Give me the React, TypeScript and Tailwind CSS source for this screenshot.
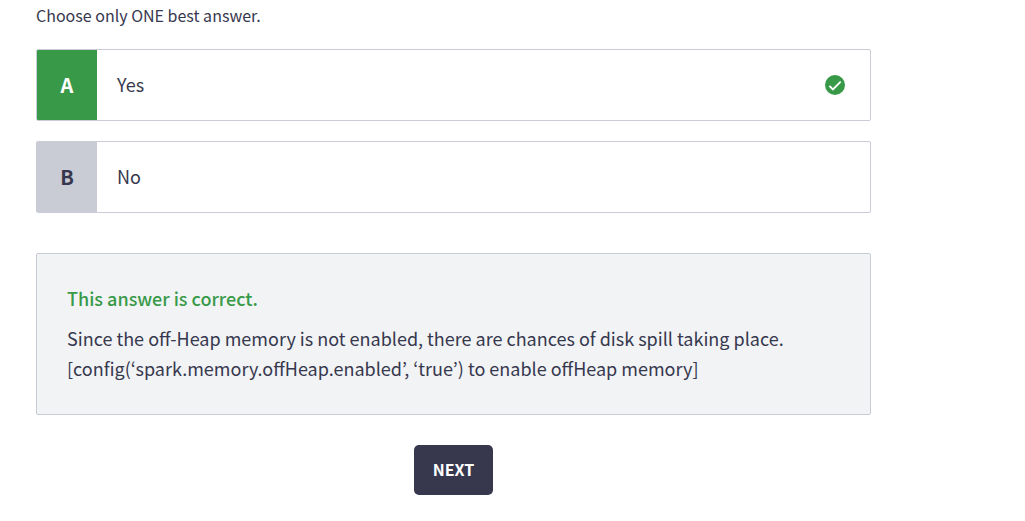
import { useState } from "react";

const options = [
  { letter: "A", text: "Yes", correct: true },
  { letter: "B", text: "No", correct: false },
];

function CorrectIcon() {
  return (
    <svg viewBox="0 0 20 20" className="size-5 shrink-0" aria-hidden="true">
      <circle cx="10" cy="10" r="10" fill="#389a49" />
      <path d="M4.4 10.9 L7.9 14.4 L15.7 6.6" fill="none" stroke="#fff" strokeWidth="1.8" />
    </svg>
  );
}

export default function App() {
  const [selected, setSelected] = useState("A");

  return (
    <main className="px-9 pt-1 pb-6 font-['Noto_Sans_CJK_KR',sans-serif] text-[#37384e]">
      <div className="max-w-[835px]">
        <fieldset>
          <legend className="mb-[22px] text-base leading-[23px]">Choose only ONE best answer.</legend>
          <div className="flex flex-col gap-5">
            {options.map(({ letter, text, correct }) => {
              const active = selected === letter;
              return (
                <label
                  key={letter}
                  className="relative flex h-[72px] cursor-pointer items-stretch overflow-hidden rounded-xs border border-[#c9cbd5] bg-white"
                >
                  <input
                    type="radio"
                    name="answer"
                    value={letter}
                    checked={active}
                    onChange={() => setSelected(letter)}
                    className="sr-only"
                  />
                  <span
                    className={`flex w-[60px] items-center justify-center text-xl font-bold ${
                      active ? "bg-[#389a49] text-white" : "bg-[#c9cbd5]"
                    }`}
                  >
                    {letter}
                  </span>
                  <span className="flex flex-1 items-center px-5 pb-0.5 text-lg">{text}</span>
                  {active && correct && (
                    <span className="flex items-center pr-[25px]">
                      <CorrectIcon />
                    </span>
                  )}
                </label>
              );
            })}
          </div>
        </fieldset>

        <section className="mt-10 rounded-xs border border-[#c9cbd5] bg-[#f1f3f5] px-[30px] pt-[29px] pb-[31px] text-lg leading-[30px]">
          <h2 className="mb-2.5 font-medium text-[#389a49]">This answer is correct.</h2>
          <p>
            Since the off-Heap memory is not enabled, there are chances of disk spill taking place.
            <br />
            [config(‘spark.memory.offHeap.enabled’, ‘true’) to enable offHeap memory]
          </p>
        </section>

        <div className="mt-[30px] flex justify-center">
          <button
            type="button"
            className="h-[50px] cursor-pointer rounded-[5px] bg-[#37384e] px-[19px] pb-0.5 text-base font-bold text-white"
          >
            NEXT
          </button>
        </div>
      </div>
    </main>
  );
}
